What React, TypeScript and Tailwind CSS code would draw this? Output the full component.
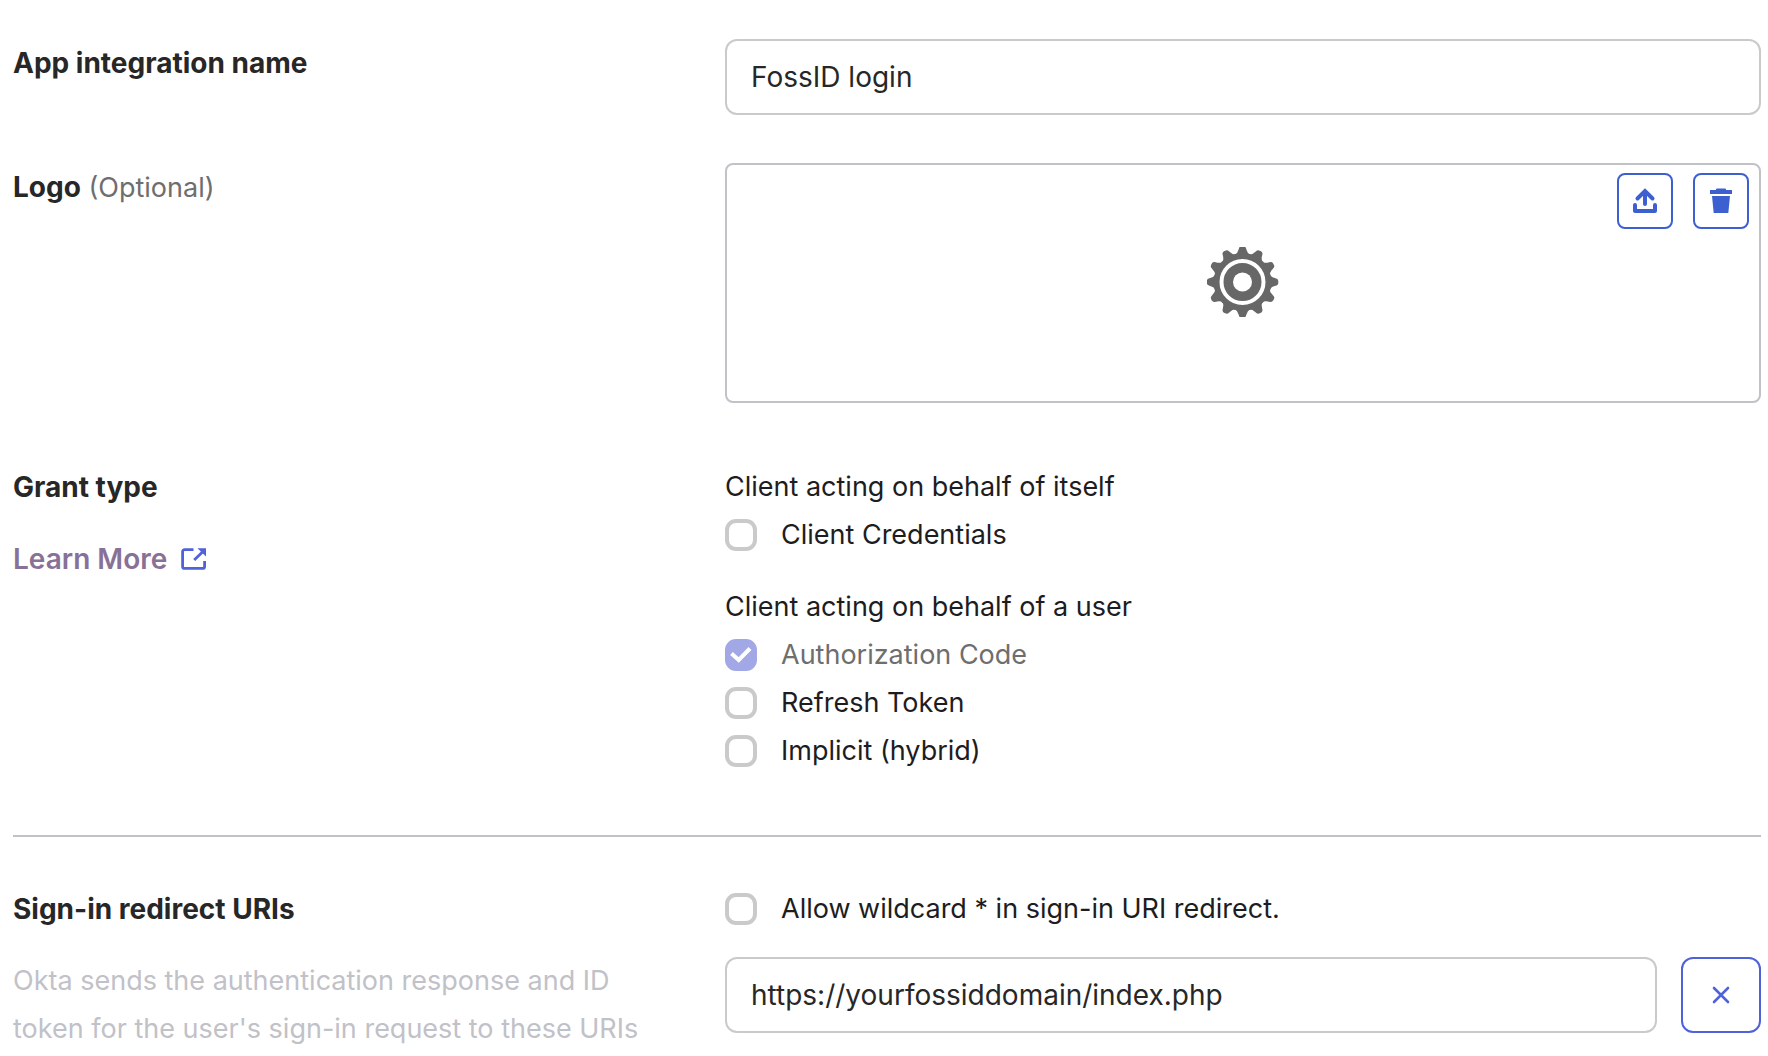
import { ReactNode, useState } from 'react';

const GEAR_ANGLES = [0, 30, 60, 90, 120, 150, 180, 210, 240, 270, 300, 330];

function GearIcon() {
  return (
    <svg width="72" height="70" viewBox="0 0 72 70" aria-hidden="true">
      <g fill="#676767">
        {GEAR_ANGLES.map((angle) => (
          <path
            key={angle}
            d="M27 9 Q31 6 31.8 2 Q32.3 -.8 34.8 -.8 H36.2 Q38.7 -.8 39.2 2 Q40 6 44 9 Z"
            transform={`rotate(${angle} 35.5 35)`}
          />
        ))}
        <circle cx="35.5" cy="35" r="29" />
      </g>
      <circle cx="35.5" cy="35" r="21" fill="none" stroke="#fff" strokeWidth="4" />
      <circle cx="35.5" cy="35" r="9.5" fill="#fff" />
    </svg>
  );
}

function UploadIcon() {
  return (
    <svg width="24" height="26" viewBox="0 0 24 26" fill="none" stroke="currentColor" strokeWidth="4" strokeLinecap="round" aria-hidden="true">
      <path d="M4.5 10.5 12 3l7.5 7.5" />
      <path d="M12 4v12" />
      <path d="M2 17v6h20v-6" strokeLinejoin="round" />
    </svg>
  );
}

function TrashIcon() {
  return (
    <svg width="22" height="26" viewBox="0 0 22 26" fill="currentColor" aria-hidden="true">
      <path d="M0 2h6V1.5Q6 .5 7 .5h8q1 0 1 1V2h6v4H0z" />
      <path d="M2 8h18l-1.7 17H3.7z" />
    </svg>
  );
}

function ExternalIcon() {
  return (
    <svg width="25" height="22" viewBox="0 0 25 22" fill="none" stroke="#4f62d9" strokeWidth="2.8" aria-hidden="true">
      <path d="M12.5 1.6H3.6a2 2 0 0 0-2 2v14.8a2 2 0 0 0 2 2h18a2 2 0 0 0 2-2V13" />
      <path d="M13.2 12 21.5 4" />
      <path d="M16.5 .3H25V8.4z" fill="#4f62d9" stroke="none" />
    </svg>
  );
}

function CloseIcon() {
  return (
    <svg width="18" height="18" viewBox="0 0 18 18" fill="none" stroke="currentColor" strokeWidth="2.6" strokeLinecap="round" aria-hidden="true">
      <path d="M2 2l14 14M16 2 2 16" />
    </svg>
  );
}

interface RowProps {
  label: ReactNode;
  children: ReactNode;
}

function Row({ label, children }: RowProps) {
  return (
    <div className="grid grid-cols-[712fr_1036fr]">
      <div className="pr-14">{label}</div>
      <div>{children}</div>
    </div>
  );
}

interface CheckboxProps {
  id: string;
  label: string;
  defaultChecked?: boolean;
  disabled?: boolean;
}

function Checkbox({ id, label, defaultChecked = false, disabled = false }: CheckboxProps) {
  const [checked, setChecked] = useState(defaultChecked);

  return (
    <div className="flex h-12 items-center gap-6">
      <span className="relative size-8 shrink-0">
        <input
          id={id}
          type="checkbox"
          checked={checked}
          disabled={disabled}
          onChange={(e) => setChecked(e.target.checked)}
          className="block size-8 appearance-none rounded-[11px] border-4 border-[#cacaca] bg-white checked:border-[#a2a8e6] checked:bg-[#a2a8e6]"
        />
        {checked && (
          <svg className="pointer-events-none absolute inset-0" width="32" height="32" viewBox="0 0 32 32" fill="none" stroke="#fff" strokeWidth="4" aria-hidden="true">
            <path d="M6.5 14.5 13.7 21 25 9.5" />
          </svg>
        )}
      </span>
      <label htmlFor={id} className={disabled ? 'text-[#6e6e6e]' : ''}>
        {label}
      </label>
    </div>
  );
}

const HEADING = 'text-[28px] leading-[48px] font-bold text-[#272727]';
const INPUT =
  'block h-[76px] w-full min-w-0 rounded-xl border-2 border-[#cacaca] bg-white px-6 text-[28px] text-[#272727] outline-none';
const LOGO_BUTTON =
  'flex size-14 items-center justify-center rounded-lg border-2 border-[#3c60d0] bg-white text-[#3c60d0]';

export default function App() {
  return (
    <form className="bg-white pt-[39px] pr-[7px] pb-[3px] pl-[13px] font-['Inter',sans-serif] text-[27px] leading-[48px] text-[#1d1d21]">
      <div className="flex flex-col gap-12">
        <Row label={<label htmlFor="name" className={HEADING}>App integration name</label>}>
          <input id="name" type="text" defaultValue="FossID login" className={INPUT} />
        </Row>

        <Row
          label={
            <>
              <span className={HEADING}>Logo</span>{' '}
              <span className="text-[#6e6e6e]">(Optional)</span>
            </>
          }
        >
          <div className="relative flex h-60 items-center justify-center rounded-lg border-2 border-[#c1c1c8] pb-0.5">
            <GearIcon />
            <div className="absolute top-2 right-2.5 flex gap-5">
              <button type="button" aria-label="Upload logo" className={LOGO_BUTTON}>
                <UploadIcon />
              </button>
              <button type="button" aria-label="Delete logo" className={LOGO_BUTTON}>
                <TrashIcon />
              </button>
            </div>
          </div>
        </Row>
      </div>

      <div className="pt-15">
        <Row
          label={
            <div className="flex flex-col items-start gap-6">
              <span className={HEADING}>Grant type</span>
              <a href="#grant-type" className="flex items-center gap-3.5 text-[28px] leading-[48px] font-semibold text-[#887196]">
                Learn More
                <ExternalIcon />
              </a>
            </div>
          }
        >
          <div className="flex flex-col gap-6">
            <div>
              <p>Client acting on behalf of itself</p>
              <Checkbox id="client-credentials" label="Client Credentials" />
            </div>
            <div>
              <p>Client acting on behalf of a user</p>
              <Checkbox id="authorization-code" label="Authorization Code" defaultChecked disabled />
              <Checkbox id="refresh-token" label="Refresh Token" />
              <Checkbox id="implicit" label="Implicit (hybrid)" />
            </div>
          </div>
        </Row>
      </div>

      <hr className="mt-15 mb-12 border-t-2 border-[#c1c1c8]" />

      <Row
        label={
          <div className="flex flex-col gap-6">
            <label htmlFor="redirect-uri" className={HEADING}>Sign-in redirect URIs</label>
            <p className="text-[#c1c1c8]">
              Okta sends the authentication response and ID token for the user's sign-in request to these URIs
            </p>
          </div>
        }
      >
        <div className="flex flex-col gap-6">
          <Checkbox id="wildcard" label="Allow wildcard * in sign-in URI redirect." />
          <div className="flex gap-6">
            <input id="redirect-uri" type="text" defaultValue="https://yourfossiddomain/index.php" className={INPUT} />
            <button
              type="button"
              aria-label="Remove URI"
              className="flex w-20 shrink-0 items-center justify-center rounded-xl border-2 border-[#4f62d9] bg-white text-[#4f62d9]"
            >
              <CloseIcon />
            </button>
          </div>
        </div>
      </Row>
    </form>
  );
}
